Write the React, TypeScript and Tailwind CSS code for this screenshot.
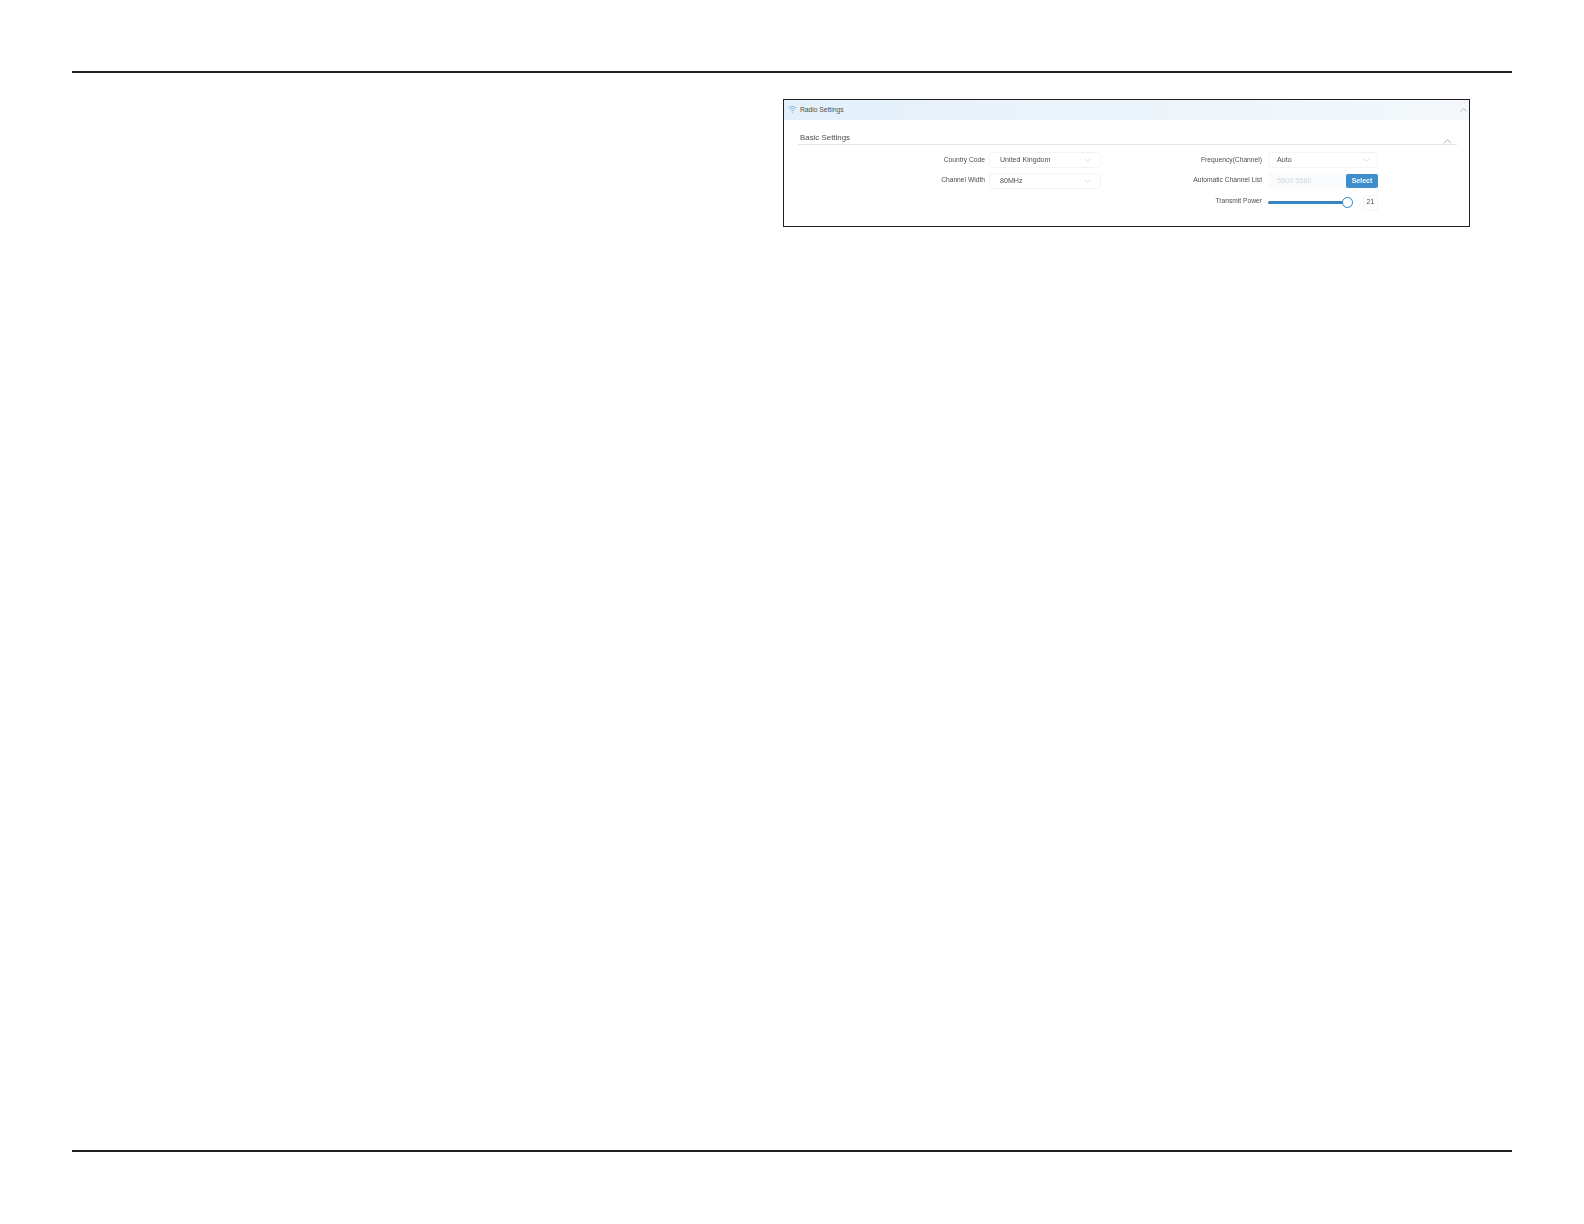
import React from "react";

const Chevron = ({ className }: { className: string }) => (
  <svg viewBox="0 0 10 6" className={className} fill="none" stroke="currentColor" strokeWidth="0.9">
    <path d="M0.5 5.2 5 0.8l4.5 4.4" />
  </svg>
);

const Field = ({ label, shift, children }: { label: string; shift: string; children: React.ReactNode }) => (
  <div className="flex h-[16px] items-center">
    <div className={`flex-1 text-right text-[6.7px] leading-[10px] text-[#4d4d4d] ${shift}`}>{label}</div>
    {children}
  </div>
);

const Select = ({ value, w, pad }: { value: string; w: string; pad: string }) => (
  <div className={`ml-[5px] flex h-[16px] ${w} ${pad} items-center justify-between rounded-[3px] border border-[#f3f4f5] text-[7.1px] text-[#4d4d4d]`}>
    <span>{value}</span>
    <Chevron className="h-[4px] w-[7px] rotate-180 text-[#c9ced3]" />
  </div>
);

export default function App() {
  return (
    <div className="h-[1224px] bg-white px-[72px] pt-[71px] font-['Liberation_Sans',Arial,sans-serif]">
      <div className="h-[2px] bg-[#231f20]" />
      <div className="ml-auto mr-[42px] mt-[26px] h-[128px] w-[687px] border border-[#231f20] bg-white">
        <div className="blur-[0.25px]">
          <div className="flex h-[20px] items-center justify-between bg-gradient-to-r from-[#e3f0fa] to-[#f4f8fb] pl-[4px] pr-[2px]">
            <div className="flex items-center gap-[3px] text-[6.7px] text-[#4d4d4d]">
              <svg viewBox="0 0 10 8" className="h-[7px] w-[9px]" fill="none" stroke="#5aa5d8" strokeWidth="0.8">
                <path d="M0.5 2.2C3 0 7 0 9.5 2.2M2 4C3.8 2.6 6.2 2.6 8 4M3.5 5.6C4.4 5 5.6 5 6.5 5.6M4.5 7.2h1" />
              </svg>
              <span>Radio Settings</span>
            </div>
            <Chevron className="h-[4px] w-[7px] text-[#8d949b]" />
          </div>
          <div className="ml-[14px] mr-[12px] mt-[13px] flex h-[12px] items-center justify-between border-b border-[#e3e5e7] pb-[2px] pl-[2px] pr-[5px]">
            <span className="text-[7.9px] leading-[10px] text-[#4d4d4d]">Basic Settings</span>
            <Chevron className="mt-[7px] h-[5px] w-[9px] text-[#8d949b]" />
          </div>
          <div className="mt-[7px] grid w-[594px] grid-cols-[317px_277px]">
            <div className="flex flex-col gap-[5px]">
              <Field label="Country Code" shift="-mr-[1px]"><Select value="United Kingdom" w="w-[112px]" pad="pl-[10px] pr-[9px]" /></Field>
              <Field label="Channel Width" shift="-mr-[1px] -mt-[2px]"><Select value="80MHz" w="w-[112px]" pad="pl-[10px] pr-[9px]" /></Field>
            </div>
            <div className="flex flex-col gap-[5px]">
              <Field label="Frequency(Channel)" shift="mr-[1px]"><Select value="Auto" w="w-[110px]" pad="pl-[8px] pr-[7px]" /></Field>
              <Field label="Automatic Channel List" shift="mr-[1px] -mt-[2px]">
                <div className="ml-[5px] flex h-[16px] w-[110px] items-center justify-between rounded-[2px] bg-[#fafbfc] pl-[9px] text-[7.3px] text-[#d2d4d6]">
                  <span>5500 5580</span>
                  <span className="flex h-[14px] w-[32px] items-center justify-center rounded-[2px] bg-[#3d8ecb] text-[7px] font-bold text-[#f4f9fd]">Select</span>
                </div>
              </Field>
              <Field label="Transmit Power" shift="mr-[1px] -mt-[2px]">
                <div className="ml-[5px] mt-[1px] flex w-[110px] items-center">
                  <div className="h-[3px] w-[75px] rounded-full bg-[#3584c0]" />
                  <div className="-ml-[1px] h-[11px] w-[11px] shrink-0 rounded-full border-[1.5px] border-[#2f7fbc] bg-white" />
                  <div className="ml-[10px] flex h-[16px] w-[15px] shrink-0 items-center justify-center rounded-[2px] border border-[#f3f4f5] text-[7px] text-[#4d4d4d]">21</div>
                </div>
              </Field>
            </div>
          </div>
        </div>
      </div>
      <div className="mt-[923px] h-[2px] bg-[#231f20]" />
    </div>
  );
}
